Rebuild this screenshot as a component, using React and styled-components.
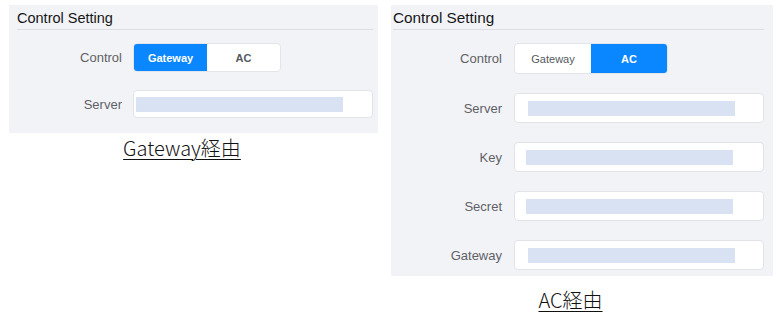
import React from "react";
import styled, { createGlobalStyle } from "styled-components";

const GlobalStyle = createGlobalStyle`
  body {
    margin: 0;
    background: #ffffff;
    font-family: "Liberation Sans", Arial, sans-serif;
  }
`;

const small = {
  width: 369,
  padLeft: 8,
  padRight: 5,
  labelWidth: 105,
  fieldGap: 11,
  titleSize: 14.5,
  segWidth: 74,
  segHeight: 29,
  inputWidth: 240,
  inputHeight: 28,
  rowGap: 18,
  bottom: 15,
};

const large = {
  width: 382,
  padLeft: 2,
  padRight: 9,
  labelWidth: 109,
  fieldGap: 12,
  titleSize: 15.3,
  segWidth: 77,
  segHeight: 31,
  inputWidth: 250,
  inputHeight: 30,
  rowGap: 19,
  bottom: 6,
};

function SettingPanel({ size, mode, fields, caption, captionGap }) {
  return (
    <Column>
      <Panel $s={size}>
        <Title $s={size}>Control Setting</Title>
        <Rows $s={size}>
          <Label>Control</Label>
          <Segmented $s={size}>
            <Segment $s={size} $active={mode === "Gateway"} $bold={mode === "Gateway"}>
              Gateway
            </Segment>
            <Segment $s={size} $active={mode === "AC"} $bold>
              AC
            </Segment>
          </Segmented>
          {fields.map((f) => (
            <React.Fragment key={f.name}>
              <Label>{f.name}</Label>
              <Input $s={size}>
                <Redacted $offset={f.offset} />
              </Input>
            </React.Fragment>
          ))}
        </Rows>
      </Panel>
      <Caption $gap={captionGap}>
        <span>{caption}</span>
      </Caption>
    </Column>
  );
}

export default function App() {
  return (
    <>
      <GlobalStyle />
      <Page>
        <SettingPanel
          size={small}
          mode="Gateway"
          fields={[{ name: "Server", offset: 3 }]}
          caption="Gateway経由"
          captionGap={3}
        />
        <SettingPanel
          size={large}
          mode="AC"
          fields={[
            { name: "Server", offset: 14 },
            { name: "Key", offset: 12 },
            { name: "Secret", offset: 12 },
            { name: "Gateway", offset: 14 },
          ]}
          caption="AC経由"
          captionGap={12}
        />
      </Page>
    </>
  );
}

const Page = styled.div`
  display: flex;
  align-items: flex-start;
  gap: 13px;
  padding: 5px 0 0 9px;
`;

const Column = styled.div`
  display: flex;
  flex-direction: column;
`;

const Panel = styled.div`
  width: ${(p) => p.$s.width}px;
  box-sizing: border-box;
  background: #f2f3f7;
  padding: 0 ${(p) => p.$s.padRight}px ${(p) => p.$s.bottom}px ${(p) => p.$s.padLeft}px;
`;

const Title = styled.div`
  font-size: ${(p) => p.$s.titleSize}px;
  line-height: 18px;
  color: #161616;
  padding-top: 4px;
  padding-bottom: 2px;
  border-bottom: 1px solid #dcdee3;
`;

const Rows = styled.div`
  display: grid;
  grid-template-columns: ${(p) => p.$s.labelWidth}px auto;
  column-gap: ${(p) => p.$s.fieldGap}px;
  row-gap: ${(p) => p.$s.rowGap}px;
  align-items: center;
  margin-top: 13px;
`;

const Label = styled.div`
  text-align: right;
  font-size: 13px;
  color: #5f6166;
`;

const Segmented = styled.div`
  display: flex;
  width: ${(p) => p.$s.segWidth * 2}px;
  height: ${(p) => p.$s.segHeight}px;
  box-sizing: border-box;
  border: 1px solid #e3e5ea;
  border-radius: 4px;
  background: #ffffff;
  overflow: hidden;
`;

const Segment = styled.div`
  flex: 1;
  display: flex;
  align-items: center;
  justify-content: center;
  font-size: 11px;
  font-weight: ${(p) => (p.$bold ? 700 : 400)};
  color: ${(p) => (p.$active ? "#ffffff" : "#555a60")};
  background: ${(p) => (p.$active ? "#0a86ff" : "transparent")};
`;

const Input = styled.div`
  width: ${(p) => p.$s.inputWidth}px;
  height: ${(p) => p.$s.inputHeight}px;
  box-sizing: border-box;
  border: 1px solid #e1e3e8;
  border-radius: 4px;
  background: #ffffff;
  display: flex;
  align-items: center;
`;

const Redacted = styled.span`
  display: block;
  width: 207px;
  height: 15px;
  margin-left: ${(p) => p.$offset - 1}px;
  background: #d9e2f3;
`;

const Caption = styled.div`
  margin-top: ${(p) => p.$gap}px;
  padding-right: 23px;
  text-align: center;
  font-family: "Noto Sans CJK JP", sans-serif;
  font-size: 20px;
  font-weight: 300;
  line-height: 24px;
  color: #111111;

  span {
    text-decoration: underline;
    text-underline-offset: 3px;
    text-decoration-thickness: 1px;
  }
`;
